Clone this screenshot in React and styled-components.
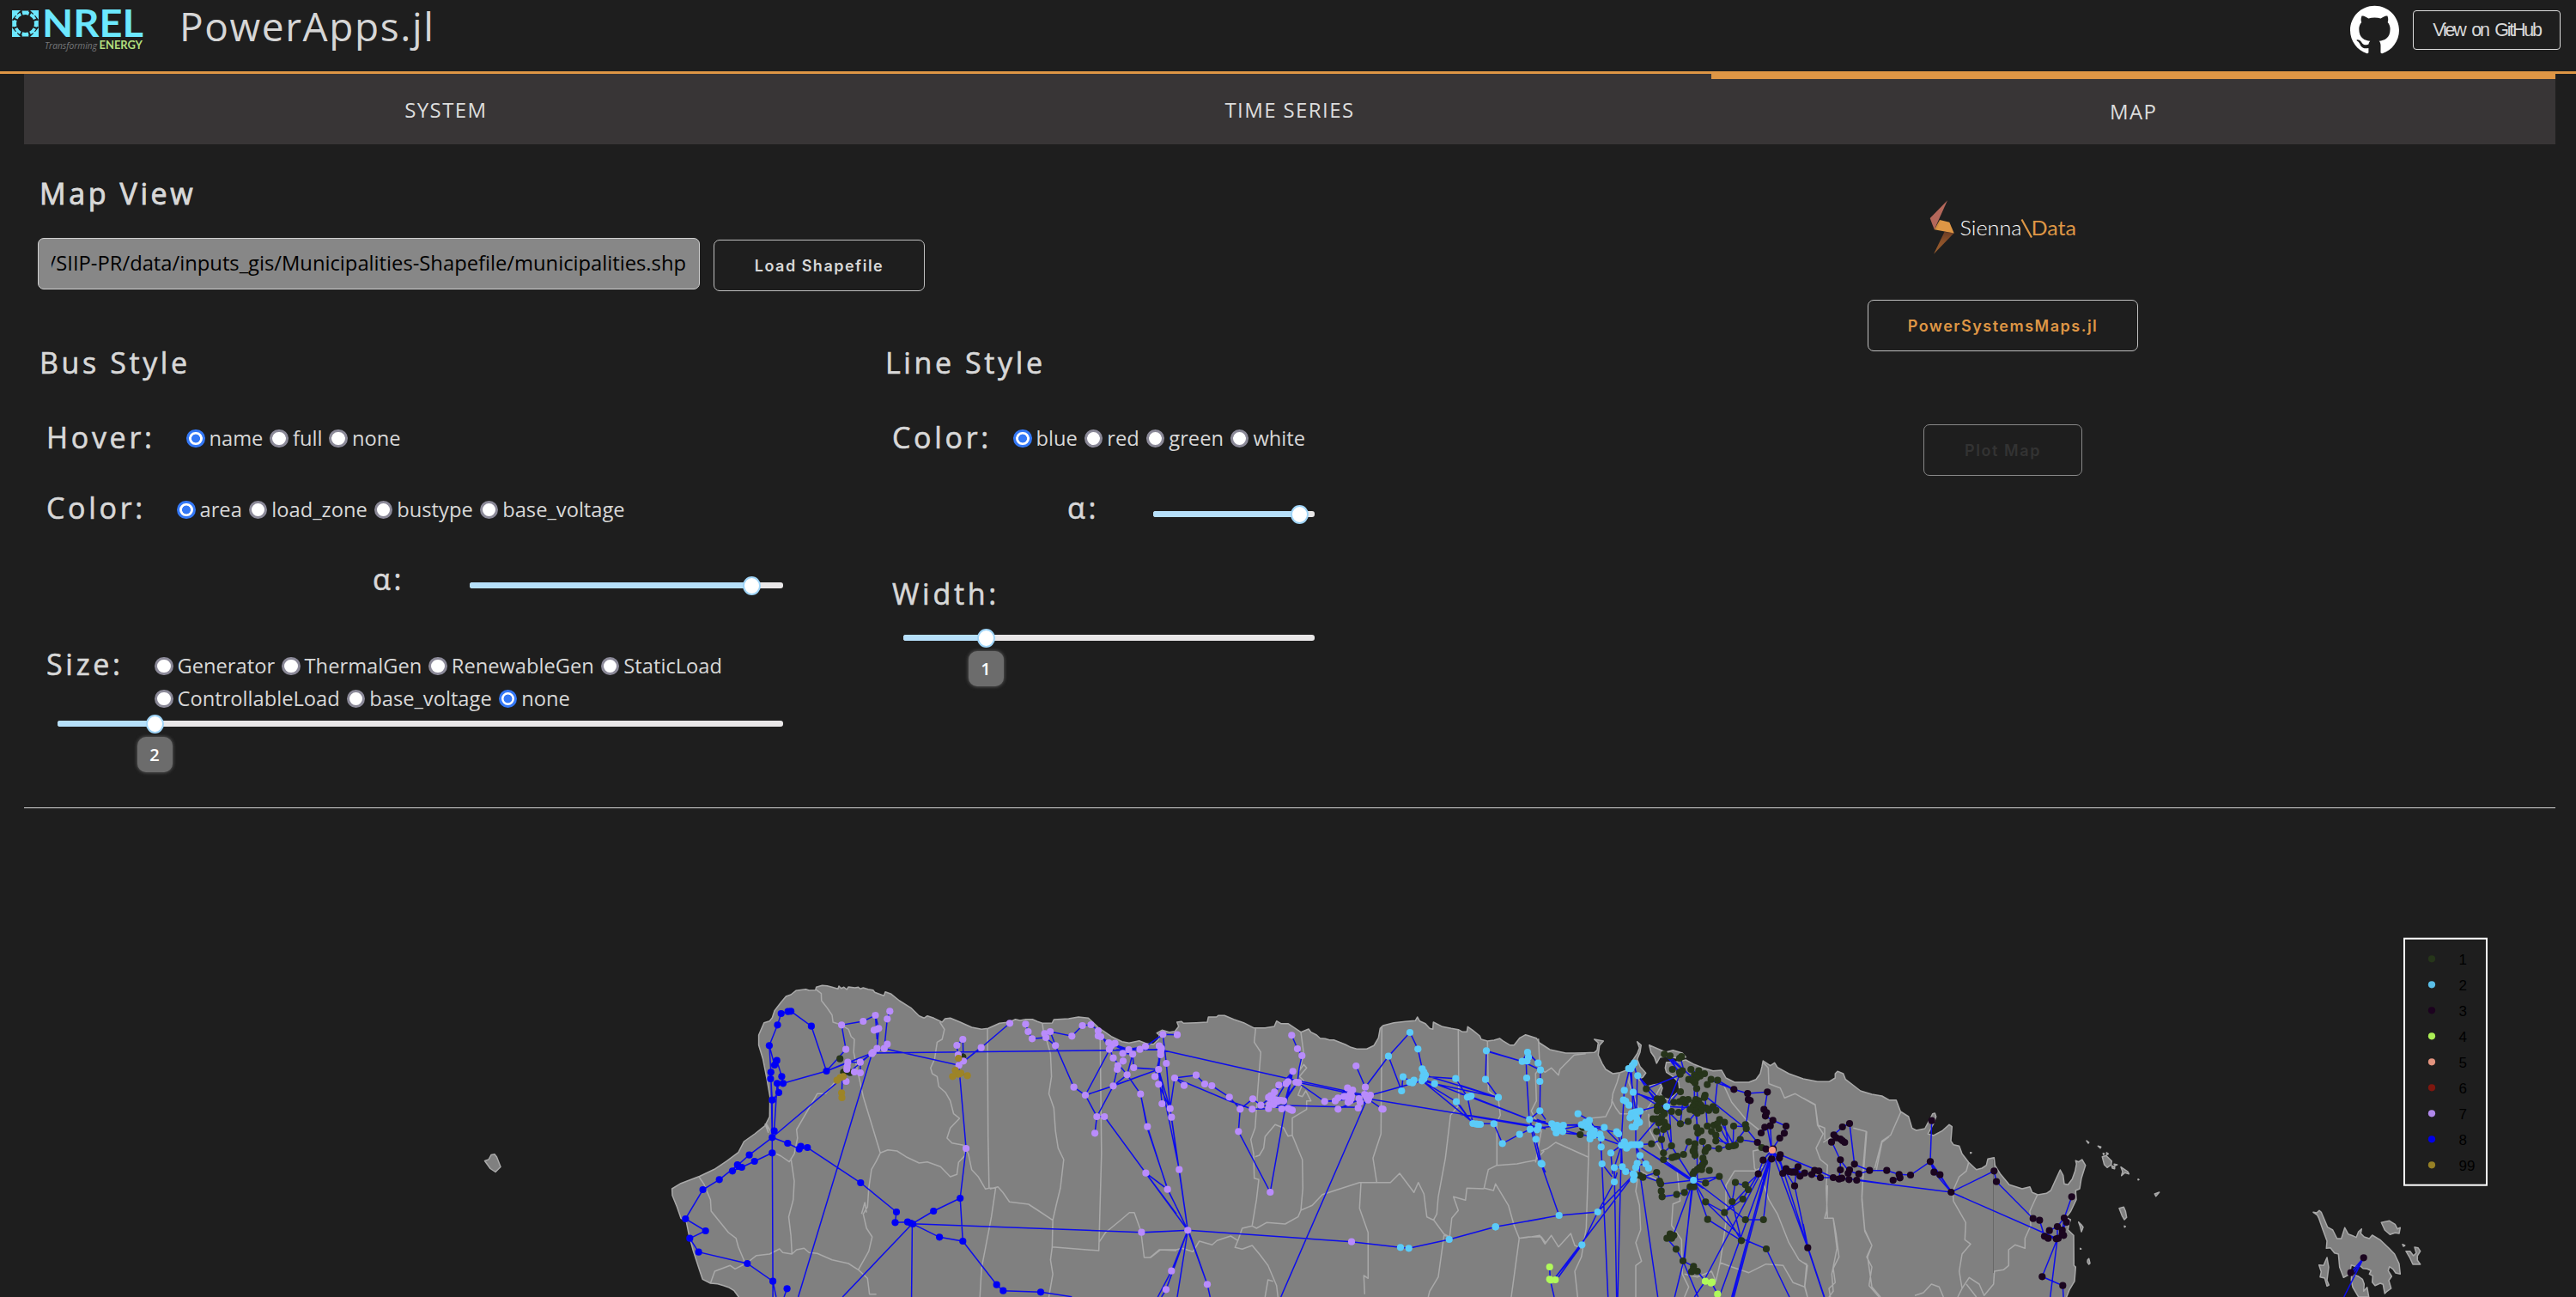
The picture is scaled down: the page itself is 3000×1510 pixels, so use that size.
import React from 'react';
import styled, { createGlobalStyle, css } from 'styled-components';

const c = {
  bg: '#1e1e1e',
  panel: '#383536',
  accent: '#de9645',
  text: '#d8d8d8',
  rule: '#d6d6d6',
  sky: '#b6e0fa',
  skyEdge: '#a0d5f8',
};

const Global = createGlobalStyle`
  * { box-sizing: border-box; }
  body {
    margin: 0;
    background: ${c.bg};
    color: ${c.text};
    font-family: "Open Sans", "Noto Sans", sans-serif;
    overflow: hidden;
  }
`;

const Page = styled.div`
  width: 3000px;
  height: 1510px;
  display: flex;
  flex-direction: column;
  overflow: hidden;
`;

/* ---------- header ---------- */

const Header = styled.header`
  height: 86px;
  flex: none;
  display: flex;
  align-items: flex-start;
  border-bottom: 3px solid ${c.accent};
  padding: 0 18px 0 12px;
`;

const LogoSvg = styled.svg`
  flex: none;
`;

const AppTitle = styled.h1`
  margin: 0 auto 0 35px;
  font-size: 46px;
  line-height: 60px;
  font-weight: 400;
  letter-spacing: 1.6px;
  color: #d6d6d6;
`;

const GithubMark = styled.svg`
  margin: 6px 16px 0 0;
`;

const GithubButton = styled.button`
  width: 172px;
  height: 46px;
  margin-top: 12px;
  padding: 0;
  background: transparent;
  border: 1.5px solid #dcdcdc;
  border-radius: 4px;
  color: ${c.text};
  font: 400 21.5px "Liberation Sans", Arial, sans-serif;
  letter-spacing: -2.25px;
  word-spacing: 4px;
`;

/* ---------- tabs ---------- */

const Tabs = styled.nav`
  display: grid;
  grid-template-columns: repeat(3, 1fr);
  height: 82px;
  flex: none;
  margin: 0 24px 0 28px;
  background: ${c.panel};
`;

const Tab = styled.a`
  display: flex;
  align-items: center;
  justify-content: center;
  font-size: 24px;
  letter-spacing: 1.4px;
  color: #dddddd;
  ${(p) => p.$active && css`
    border-top: 6px solid ${c.accent};
    padding-bottom: 2px;
  `}
`;

/* ---------- controls ---------- */

const Controls = styled.main`
  display: grid;
  grid-template-columns: 1661px 1287px;
  height: 773px;
  flex: none;
  margin: 0 24px 0 28px;
  border-bottom: 1.5px solid ${c.rule};
`;

const Settings = styled.section`
  display: flex;
  flex-direction: column;
  padding-top: 37px;
`;

const Heading = styled.h2`
  margin: 0;
  padding-left: 18px;
  font-size: 34px;
  line-height: 40px;
  font-weight: 400;
  letter-spacing: 3.6px;
  -webkit-text-stroke: ${(p) => (p.$strong ? 0.9 : 0.6)}px ${c.text};
`;

const FileRow = styled.div`
  display: flex;
  align-items: flex-start;
  gap: 16px;
  padding: 32px 0 0 16px;
  height: 94px;
`;

const PathField = styled.div`
  width: 771px;
  height: 60px;
  padding: 0 15px;
  display: flex;
  align-items: center;
  border: 1.5px solid #d0d0d0;
  border-radius: 7px;
  background: #878787;
  color: #000;
  font-size: 23.75px;
`;

const PathText = styled.div`
  flex: 1;
  display: flex;
  justify-content: flex-end;
  overflow: hidden;
  white-space: nowrap;
  line-height: 40px;
  padding-bottom: 2px;
`;

const Button = styled.button`
  width: ${(p) => p.$w}px;
  height: 60px;
  padding: 0;
  flex: none;
  background: transparent;
  border: 1.3px solid #bfbfbf;
  border-radius: 7px;
  font: 600 18px Inter, sans-serif;
  letter-spacing: ${(p) => p.$track || 1.5}px;
  color: ${c.text};
  ${(p) => p.$kind === 'file' && css`margin-top: 2px;`}
  ${(p) => p.$kind === 'accent' && css`color: ${c.accent};`}
  ${(p) => p.$kind === 'dim' && css`color: #333333; border-color: #888888;`}
`;

const StyleColumns = styled.div`
  display: grid;
  grid-template-columns: 985px 676px;
  margin-top: 63px;
`;

const StyleColumn = styled.section`
  display: flex;
  flex-direction: column;
`;

const Field = styled.div`
  display: flex;
  align-items: flex-start;
  margin-top: ${(p) => p.$gap}px;
  padding-left: ${(p) => p.$indent ?? 26}px;
  height: 40px;
`;

const FieldLabel = styled.label`
  width: ${(p) => p.$w}px;
  flex: none;
  font-size: 34px;
  line-height: 40px;
  font-weight: 400;
  letter-spacing: 3.7px;
  -webkit-text-stroke: 0.6px ${c.text};
`;

const Options = styled.div`
  display: flex;
  flex-wrap: wrap;
  align-items: center;
  align-content: flex-start;
  column-gap: 8px;
  width: ${(p) => (p.$w ? `${p.$w}px` : 'auto')};
  padding-top: ${(p) => p.$top ?? 2}px;
`;

const Option = styled.label`
  display: flex;
  align-items: center;
  gap: 5px;
  font-size: 23.7px;
  line-height: 38px;
`;

const Radio = styled.input`
  appearance: none;
  width: 21.5px;
  height: 21.5px;
  margin: 1px 0 0;
  border-radius: 50%;
  border: 3px solid #8b8998;
  background: #fff;
  &:checked {
    border-color: #3478f6;
    background: radial-gradient(circle, #3478f6 0 4.6px, #fff 5.3px);
  }
`;

const SliderTrack = styled.div`
  position: relative;
  width: ${(p) => p.$w}px;
  height: 7px;
  margin: ${(p) => p.$margin};
  flex: none;
  border-radius: 3px;
  background: #e9e7e8;
`;

const SliderFill = styled.div`
  height: 7px;
  border-radius: 3px 0 0 3px;
  background: ${c.sky};
`;

const SliderThumb = styled.div`
  position: absolute;
  top: -7.5px;
  width: 21px;
  height: 22px;
  margin-left: -10.5px;
  border-radius: 50%;
  border: 2.5px solid ${c.skyEdge};
  background: #fff;
`;

const SliderBubble = styled.div`
  position: absolute;
  top: 19px;
  width: 41px;
  height: 41px;
  margin-left: -20.5px;
  border-radius: 10px;
  background: #6c6c6c;
  box-shadow: 0 0 4px #6c6c6c;
  color: #fff;
  font-size: 20px;
  font-weight: 600;
  line-height: 41px;
  text-align: center;
`;

const Actions = styled.aside`
  display: flex;
  flex-direction: column;
  align-items: center;
  padding-top: 65px;
`;

const SiennaSvg = styled.svg`
  margin-bottom: 53px;
`;

const PlotSlot = styled.div`
  margin-top: 85px;
`;

/* ---------- map ---------- */

const MapSvg = styled.svg`
  display: block;
  flex: none;
`;

function Slider({ width, value, bubble, margin }) {
  return (
    <SliderTrack $w={width} $margin={margin}>
      <SliderFill style={{ width: value }} />
      <SliderThumb style={{ left: value }} />
      {bubble && <SliderBubble style={{ left: value }}>{bubble}</SliderBubble>}
    </SliderTrack>
  );
}

function RadioGroup({ name, items, selected, width, top }) {
  return (
    <Options $w={width} $top={top}>
      {items.map((t) => (
        <Option key={t}>
          <Radio type="radio" name={name} defaultChecked={t === selected} />
          {t}
        </Option>
      ))}
    </Options>
  );
}

function NrelLogo() {
  return (
    <LogoSvg width="162" height="66" viewBox="12 0 162 66">
      <g fill="#6ce8ff">
        <path d="M14 12h10l-4 4 1 3-3-1-4 5zM45 12H35l4 4-1 3 3-1 4 5zM14 43h10l-4-4 1-3-3 1-4-5zM45 43H35l4-4-1-3 3 1 4-5z" />
        <path d="M25.500 12.500h8l-1 4h-6zM25.500 42.500h8l-1-4h-6zM14.200 23.500l3 1v6l-3 1zM44.800 23.500l-3 1v6l3 1z" />
      </g>
      <circle cx="29.500" cy="27.500" r="12.200" fill="none" stroke="#6ce8ff" strokeWidth="3.600" strokeDasharray="7.600 1.980" strokeDashoffset="3.800" />
      <text x="49" y="43" textLength="118" lengthAdjust="spacingAndGlyphs" fill="#6ce8ff" fontFamily="Lato, sans-serif" fontWeight="700" fontSize="43">NREL</text>
      <text x="52" y="56.500" textLength="61" lengthAdjust="spacingAndGlyphs" fill="#77787b" fontFamily="Open Sans, sans-serif" fontStyle="italic" fontSize="11.500">Transforming</text>
      <text x="115.500" y="57" textLength="50.500" lengthAdjust="spacingAndGlyphs" fill="#b2df7e" fontFamily="Lato, sans-serif" fontWeight="700" fontSize="12.500">ENERGY</text>
    </LogoSvg>
  );
}

function SiennaLogo() {
  return (
    <SiennaSvg width="173" height="63" viewBox="2246 233 173 63">
      <defs>
        <linearGradient id="low" x1="0" y1="0" x2="0" y2="1">
          <stop offset="0" stopColor="#6b3c24" />
          <stop offset="0.400" stopColor="#8a5029" />
          <stop offset="1" stopColor="#9c6030" />
        </linearGradient>
        <linearGradient id="mid" x1="0" y1="0" x2="1" y2="0.300">
          <stop offset="0" stopColor="#9c6530" />
          <stop offset="0.350" stopColor="#de9645" />
        </linearGradient>
      </defs>
      <path d="M2264.500 270L2275.700 271.300 2252 295.700z" fill="url(#low)" />
      <path d="M2259 256L2270.300 258.700 2275.700 271.500 2252.700 267.300z" fill="url(#mid)" />
      <path d="M2268 233.300L2247.700 254 2252.700 267.300z" fill="#b4675a" />
      <text x="2282.500" y="274" textLength="72" lengthAdjust="spacingAndGlyphs" fill="#fff" fontFamily="Lato, sans-serif" fontWeight="300" fontSize="23.500">Sienna</text>
      <path d="M2354.500 255.500L2366 276.500" stroke={c.accent} strokeWidth="2.200" />
      <text x="2365.500" y="274" textLength="52.500" lengthAdjust="spacingAndGlyphs" fill={c.accent} fontFamily="Lato, sans-serif" fontSize="23.500">Data</text>
    </SiennaSvg>
  );
}

/* Map geometry is stored per tile; each tile has its own origin and scale. */
const TILES = {
  A: [770, 1110, 2.6133, 3],
  B: [1300, 1110, 3, 3],
  C: [1700, 1110, 3, 3],
  D: [2100, 1180, 3, 3],
  E: [2640, 1070, 3, 3],
};

const project = (tile, s) => {
  const [ox, oy, sx, sy] = TILES[tile];
  return s.trim().split(/\s+/).map((p) => {
    const [x, y] = p.split(',').map(Number);
    return [+(ox + x / sx).toFixed(1), +(oy + y / sy).toFixed(1)];
  });
};

const toPath = (pts) => 'M' + pts.map((p) => p.join(' ')).join('L');
const linesOf = (tile, s) => s.trim().split('|').map((l) => toPath(project(tile, l))).join('');

const coast = toPath([
  ...project('A', '236,1215 236,1200 222,1178 205,1166 190,1160 172,1154 150,1152 126,1138 115,1100 98,1040 85,985 76,935 60,925 48,885 34,845 33,822 60,803 118,778 165,752 200,725 235,695 252,657 285,630 316,602 330,570 331,500 322,440 310,370 297,320 297,285 313,242 330,236 338,225 345,200 365,170 380,150 395,144 410,130 440,125 450,129 470,128 472,118 490,112 505,113 520,118 538,124 541,114 548,122 556,118 565,126 570,117 590,120 600,118 606,124 615,120 630,125 645,128 650,136 660,140 678,148 682,134 700,142 725,165 760,190 785,218 800,226 810,218 830,226 855,240 864,228 880,226 910,240 945,258 975,265 995,262 1030,244 1060,240 1078,230 1092,234 1110,230 1130,230 1145,238 1160,244 1190,243 1195,231 1240,228 1270,222 1300,226 1330,258 1370,290'),
  ...project('B', '20,308 45,313 80,305 105,315 130,317 148,300 150,285 142,278 160,268 185,275 205,272 218,255 212,240 228,238 235,244 280,242 318,240 322,222 350,222 356,217 378,217 410,230 445,242 480,260 520,260 552,255 560,236 575,245 600,245 645,275 672,264 680,275 700,285 712,296 730,298 745,302 760,302 800,318 820,328 840,334 875,334 900,322 916,295 922,262 932,252 970,242 1010,238 1045,235 1052,222 1060,236 1080,245 1095,262 1106,265 1108,240 1140,256 1170,262 1195,266 1210,274 1225,274 1228,256 1245,268 1270,288 1275,300'),
  ...project('C', '97,306 120,303 140,297 150,305 175,320 190,320 210,295 230,284 268,296 278,312 315,336 370,348 400,348 440,347 470,346 480,338 484,312 470,300 502,306 488,322 484,355 498,385 510,405 535,420 560,416 590,405 600,380 620,350 628,330 620,308 634,320 630,345 620,370 630,395 650,418 640,432 625,440 640,450 655,465 680,458 702,455 708,470 702,490 712,505 730,510 750,495 768,480 765,450 745,430 722,415 718,400 722,380 750,380 790,372 820,388 850,400 885,410 915,408 922,420 930,435 960,450 1010,450 1035,440 1050,420 1056,395 1060,375 1085,392 1100,382 1110,398 1150,420 1200,438 1250,448 1290,448 1312,435 1312,420 1320,412 1340,420 1348,440 1400,480 1440,492 1475,498'),
  ...project('D', '300,302 325,302 340,342 368,360 380,400 395,408 425,402 445,365 452,350 460,348 464,360 455,385 436,420 455,426 485,410 510,388 520,395 516,445 525,458 545,463 555,490 578,520 605,545 625,540 640,530 645,508 667,503 670,530 690,562 720,598 765,612 792,605 800,625 820,633 850,628 865,618 880,585 898,546 908,565 912,595 925,598 940,578 950,550 955,525 952,514 962,518 974,510 986,530 972,575 966,612 952,618 954,650 935,690 928,700 918,712 934,720 928,738 925,755 945,775 946,880 952,885 948,935 930,965 920,990 920,1010'),
]) + 'Z';

const islands = [
  ['C', '662,320 690,332 720,345 745,338 778,348 790,362 760,366 725,360 700,362 688,384 680,362 668,345'],
  ['D', '1045,500 1058,496 1078,515 1076,528 1062,538 1052,528'],
  ['D', '1078,532 1088,535 1088,542 1080,540'],
  ['D', '1086,526 1097,528 1090,531'],
  ['D', '1110,536 1122,544 1134,552 1138,560 1124,556 1112,566 1116,552'],
  ['D', '990,444 998,450 996,453'],
  ['D', '1030,463 1040,466 1038,470'],
  ['D', '1048,488 1052,490 1049,493'],
  ['D', '1060,486 1066,490 1061,493'],
  ['D', '1104,680 1120,676 1126,690 1130,712 1122,720 1114,706'],
  ['D', '1228,630 1244,624 1236,634 1232,638'],
  ['D', '962,728 972,738 978,746 972,762 968,745'],
  ['D', '994,860 998,856 1002,872 998,876 993,868'],
  ['D', '584,485 588,486 585,488'],
  ['D', '1170,578 1173,580 1170,581'],
  ['D', '1122,742 1126,744 1123,746'],
  ['D', '968,820 971,822 968,823'],
  ['E', '162,1024 174,1026 183,1018 190,1024 200,1048 212,1076 230,1086 245,1116 260,1116 272,1078 284,1100 300,1106 312,1112 320,1092 331,1082 328,1098 340,1110 358,1116 368,1104 395,1120 425,1148 446,1170 462,1204 466,1240 450,1236 440,1222 428,1214 424,1228 436,1248 426,1262 434,1290 420,1300 412,1308 406,1276 396,1272 378,1280 368,1268 370,1246 358,1240 364,1228 350,1222 336,1220 322,1208 312,1214 295,1208 292,1224 286,1242 268,1252 254,1216 250,1170 236,1166 222,1148 208,1150 210,1124 196,1086 182,1046 176,1034'],
  ['E', '296,1240 320,1248 334,1258 340,1275 338,1300 350,1286 356,1320 320,1320 300,1286 295,1262'],
  ['E', '182,1208 198,1210 210,1182 216,1216 210,1262 217,1278 210,1282 202,1254 186,1250 190,1232'],
  ['E', '400,1060 428,1054 448,1066 456,1082 466,1078 462,1098 448,1096 430,1102 412,1086'],
  ['E', '486,1160 500,1160 512,1176 522,1166 516,1146 528,1148 536,1160 526,1176 526,1192 536,1206 510,1206 500,1184'],
  ['E', '474,1136 482,1140 477,1143'],
].map(([t, s]) => toPath(project(t, s)) + 'Z').join('') + 'M564.500 1351.500L569 1350 572 1344.500 576 1343.700 578.500 1347 583 1358.500 577 1364.500 571 1360.500Z';

const borders = [
  ['A', '470,125 487,140 488,165 505,190 520,215 523,240 545,248 570,265 578,290 588,300 586,345 592,380 615,500 640,595 667,697 655,725 640,755 632,820 628,885 615,910 625,960 642,990 632,1040 600,1105 628,1135 634,1190 655,1190|667,697 690,686 718,690 745,710 785,732 810,728 850,745 880,780 900,772 905,730 925,705 920,670 885,662 870,645 880,610 908,576 890,560 880,515 865,485 845,465 840,430 825,420 820,400 832,370 840,310 855,300 862,265 848,240|993,262 995,640 998,820 987,823 965,780 945,755 935,700 920,672|550,415 535,440 500,490 475,490 440,560 412,615 415,645 405,700 390,728 365,708 350,700|395,715 405,795 402,860 388,920 395,985 398,1050 370,1045 360,1032 330,1050 290,1055 262,1080|316,595 326,625 320,595 335,625|115,780 130,805 150,860 152,900 180,940 205,975 228,995 235,1025 255,1080|150,1152 163,1110 210,1090 225,1102 262,1080 |398,1050 412,1035 435,1030 450,1045 475,1048 520,1070 570,1083 600,1105|610,910 620,870 625,905|998,820 1018,820 1005,920 975,1100 970,1200|1000,823 1025,815 1040,835 1060,868 1118,876 1150,900 1192,932|1160,244 1165,285 1175,310 1185,350 1188,430 1180,490 1195,540 1200,620 1208,680 1225,720 1215,820 1202,880 1192,932 1190,1025 1185,1070 1192,1120 1180,1200|1336,290 1340,700 1332,1038 1190,1025|1332,1010 1352,975 1400,930 1425,905 1440,905 1460,970 1470,1062 1490,1062 1520,1035 1568,1038'],
  ['B', '98,1062 118,1062 150,1035 210,1035 230,1030 268,1042 290,1005 335,1018 352,1003 400,987 425,1003 440,960 475,952 490,960 525,940 590,945 635,920 645,897 685,880 720,842 780,823 850,800 958,800 990,768 1040,835 1055,800 1075,840 1085,920 1110,932 1145,980 1165,990 1172,925 1195,898 1178,850 1220,862 1225,820 1285,822|487,262 482,310 505,345 495,470 485,610 470,650 480,700 482,785 498,790 490,860 475,950|485,710 500,705 515,680 520,640 555,598 585,610 600,638 615,635 650,720 652,820 645,897|615,635 615,575 665,545 665,515 680,515 662,480 650,500 635,495 655,445 640,430 665,400 655,388 640,410 655,350 645,275|928,254 925,630 897,715 910,798|855,800 850,890 880,975 880,1135 865,1125 868,1190|1195,265 1197,530 1168,565 1150,715 1125,850 1120,910 1108,932|1297,306 1300,480 1335,510 1342,565 1330,590 1330,740 1300,755 1285,820|1330,740 1400,735 1465,722 1495,690|1285,820 1318,828 1325,805 1370,880 1390,950 1408,995 1395,1090 1380,1200|1165,990 1145,985 1125,1130 1095,1180 1090,1200|425,1003 415,1027 440,1033 475,1020 500,1050 530,1090 560,1160 565,1200|520,1200 530,1140 548,1145|1405,995 1440,990 1485,990 1500,1010'],
  ['C', '275,298 280,400 298,415 320,400 345,425 350,405 400,355 440,350|280,400 265,420 268,515 250,550 285,620 265,730|285,690 305,682 335,660 450,712 452,600 460,575 510,570 530,530 535,490 550,450 558,420|450,712 442,960 425,1060 402,1110 412,1200|205,995 250,990 280,985 298,1015 320,985 345,1025 388,978 402,1020 425,1030|530,510 545,540 560,560 590,560|600,400 590,450 630,555|625,760 615,830 628,880 632,965 615,1010 635,1075 615,1090 615,1200|630,760 690,790|650,550 680,505 705,460|660,560 665,620 720,720 760,760 770,865 745,875 740,950 775,1000 778,1120 800,1165 785,1200|785,1120 830,1130 880,1110 895,1145 910,1080 930,940 930,810 960,760 1030,760 1060,745|910,1080 950,1095 1010,1115 1070,1085 1130,1090 1165,1150 1205,1165|1060,380 1078,400 1080,455 1120,470 1135,505 1172,490 1242,530 1250,600 1270,630 1245,680 1260,720 1285,740 1280,820 1285,925 1305,925 1318,1030 1300,1120 1305,1180 1290,1200|920,455 950,520 1000,580 1050,620|1050,685 1025,690 1030,750 1060,800 1080,860 1110,910 1150,1010 1185,1070 1215,1090 1205,1165 1215,1200|1270,660 1300,640|1375,610 1420,622 1410,740 1405,850 1415,965 1440,1020 1425,1060 1440,1165 1470,1200|1500,640 1475,660 1455,760'],
  ['D', '342,342 305,425 275,445 250,540|222,412 215,500 208,590 205,650 215,760 240,810 222,850 240,885 230,950 265,990|0,295 42,318 52,390 75,400 75,440|85,600 82,690 75,715 105,715 115,770 125,850 105,890 112,940 90,960 95,990|578,520 570,550 545,570 523,620 525,655 568,730 565,790 585,805 555,840 545,900 555,960 540,990|555,960 580,922 615,945 632,985 665,945 668,900 700,895 718,880 718,825 740,808 775,820 775,785 795,740 792,690 818,633|390,985 420,975 448,945 475,955 490,990|570,945 605,990|0,870 12,875 5,950 15,990'],
].map(([t, s]) => linesOf(t, s)).join('');

const circuits = [
  ['A', '338,643 334,415 329,322 354,250 365,210 386,202 395,202 457,254 503,411 371,454 353,454 358,486 338,512|329,322 345,390 352,374 367,430 371,454|353,454 344,620|338,512 338,643 338,697 284,726 245,747 217,760|334,438 338,512|338,643 268,704 232,740 177,790 127,825 74,927 135,969 87,995 114,1043 262,1083 340,1145 350,1200|338,643 340,1145 340,1200|383,1171 374,1200|338,643 385,663 420,683 445,678 607,801 716,903 712,940 750,938 764,944 829,900 910,855 918,1005 847,991 764,944|764,944 762,1200|764,944 552,1200|338,643 555,432 642,348|503,411 642,348 417,1200|503,411 562,335 549,250 615,237 652,216 662,262 657,332 642,348|648,268 662,262|652,216 657,300|503,411 568,380 606,380 606,417 588,414|606,380 642,348 679,332 688,229 696,202|679,332 906,391 974,329 1061,244|642,348 1362,338 1525,336|906,391 900,320 918,300 920,376|906,391 974,327|905,365 906,391 928,681 910,855|897,410 932,427|549,505 552,420|918,1005 1021,1157 1041,1178 1155,1183 1250,1199|764,944 1462,974 1568,969|1109,247 1117,273 1129,298 1170,294 1184,273 1250,289 1282,252 1308,249 1330,270 1337,290 1364,313 1423,335 1474,325 1526,283|1170,294 1200,322 1256,467 1291,495 1326,570 1320,628|1184,273 1200,322|1291,495 1376,463 1418,424 1376,365 1364,330 1330,270|1364,313 1435,352 1438,399 1513,405|1364,338 1291,495|1326,570 1376,463 1513,405|1326,570 1349,570 1475,767 1541,824|1406,376 1388,405 1376,463|1405,349 1435,352 1418,424 1459,491 1480,605 1541,824 1568,885|1475,767 1568,910|1364,310 1423,340 1457,335'],
  ['B', '163,283 213,284|163,283 175,384 188,542 250,967|150,323 148,405 160,525|155,340 148,405 188,542|148,405 220,755 250,967|0,325 40,335 103,325 163,283|0,337 150,335 615,440 870,495|60,400 148,405|148,405 0,458|148,456 188,542 193,572 250,967|135,430 155,350|204,435 188,542|204,435 279,425 309,456 334,462 395,502 433,544 427,622 538,834 590,540 617,412|237,461 204,435 395,515 475,544 531,542|433,544 477,508 505,530 580,540|505,530 545,500 568,460 603,450 617,412 590,515|553,485 617,412 613,430 540,495|553,520 617,412|590,515 633,450|595,500 633,450 728,517 765,515 808,470|633,450 639,400 649,357 633,333 613,286|633,450 870,500|560,530 845,538 890,500|838,393 870,467 877,507 931,544|728,517 810,510|775,544 850,510|845,540 870,500 997,465 1068,445|870,467 951,359 1026,276 1054,334 1069,403 1078,425|951,359 997,480 1002,431 1034,450|877,507 575,1200|877,507 1443,600 1500,612|1075,430 1186,437 1227,502 1246,594|1068,445 1112,455 1335,503|1078,425 1335,503|1068,445 1188,518 1246,594|1075,450 1246,590|1075,440 1443,580|1246,594 1319,595 1349,664 1409,632 1446,614|1293,340 1290,440 1335,503|1293,340 1418,377 1437,345 1474,383 1482,407 1480,550 1443,580|1418,377 1482,407|1434,435 1432,377|1434,435 1443,580 1466,649 1486,735 1500,765|1443,580 1500,588|1446,600 1480,735|1465,600 1500,610|103,767 180,824 250,967|103,767 250,967 88,975|180,824 107,606 85,491|250,967 822,1007 993,1027 1022,1030 1163,999 1325,955 1500,924|250,967 193,1109 145,1200|250,967 174,1174 158,1200|250,967 213,1200|252,967 318,1156 328,1200|250,967 318,1156|1480,550 1500,580'],
  ['C', '93,341 218,377|0,460 135,503|0,490 40,500 244,580 320,600 455,600|0,530 45,595|0,562 244,604|234,345 274,383 282,407|244,580 266,649 284,735 347,915|125,955 347,915 482,903 540,798 550,765|244,604 270,610 360,600|270,580 320,600|330,610 420,632 495,645 565,670|355,615 430,600 505,608 565,670|340,625 421,633|413,560 453,583 490,632 497,735 532,780|360,600 425,598|425,600 550,625 565,670 615,668|482,903 427,1018 335,1130|427,1018 345,1130|482,903 615,765 335,1130|314,1095 316,1140 330,1200|494,676 518,1200|534,770 528,697 565,670 540,748 548,1200|565,670 552,1200|565,650 575,478 593,402 606,485|575,478 593,402 615,553 615,668|606,380 620,430 618,553|600,402 605,550|590,530 572,512 575,478|606,485 700,520|622,427 700,512|625,430 690,525|620,490 695,515|625,490 690,530|652,473 768,425 723,535|655,475 695,520|630,550 688,535|630,580 635,553|615,668 690,580|615,668 630,706 660,750|615,668 670,665 705,650 712,697 739,672 815,792|615,668 817,792 712,720 750,710 782,702 800,658|620,670 850,820|615,668 692,1200|635,782 688,765 705,805 817,792|620,770 705,800 707,850 758,842 785,835 817,792|565,670 568,745 610,770 606,790|615,740 650,735|540,748 568,745|717,352 770,400|735,360 760,410|740,365 775,400|770,360 782,405 820,440|720,355 768,415|768,480 723,535 830,540|695,520 771,595 798,588 830,550|765,555 800,530|771,595 780,510 745,520|830,470 828,560 830,792|820,410 820,530 835,630 820,720|825,430 835,550|855,495 830,540 890,548|857,497 865,603 895,650|901,443 890,545|870,440 958,475 1006,489 1075,484 1065,545 1068,568|901,443 958,475|860,500 1000,612|905,445 960,480|1013,513 1001,590 1001,612 1040,660|1006,489 1013,513|865,540 880,550|908,580 958,670|905,600 945,675|957,603 955,670|925,590 940,672 905,683 870,678 856,692|880,620 940,675|895,650 955,670 1000,612|957,603 1000,605|980,650 1040,660 1068,683|848,655 856,692 817,792|740,672 733,550|715,590 740,672|690,585 712,697|710,640 720,590|817,792 859,868 925,905 989,858 1008,825|817,792 907,779 952,867|817,792 859,802 907,779|817,792 866,929 984,1003 952,867 963,800 998,812|817,792 998,930 1061,930 1090,687|859,868 984,990|925,905 984,1003|925,905 1000,825|984,995 1071,1032 1152,1200|817,792 782,1074 751,1200|812,800 785,1074|817,792 748,980 724,995 756,1033 780,1074 833,1200|780,1074 817,1093 830,1110 858,1145 880,1150 901,1190|858,1145 820,1200|855,1140 1090,695|910,1190 1090,695|950,1200 1090,690|958,1200 1092,695|953,1200 1085,700|1090,687 1060,722 1043,770 989,858|1043,770 998,812|1090,687 1075,610 1053,627|1090,687 1085,602 1094,583 1068,568|1090,687 1118,645 1134,628 1140,603 1094,583|1066,607 1085,602|1090,687 1117,715 1129,768 1182,745 1189,778|1120,703 1255,760 1305,783|1090,687 1170,812 1216,1028|1090,687 1216,1028 1273,1200|1117,715 1216,1028|1170,812 1175,765|1129,768 1140,750 1205,767 1230,772 1260,783 1305,783|1230,770 1243,758|1300,658 1330,722 1359,760 1393,770 1432,758 1500,758|1308,632 1338,606 1362,594 1379,737 1432,758|1345,658 1308,632|1330,722 1330,756 1325,785|1305,783 1385,790 1500,806'],
  ['D', '185,582 517,624 667,550 675,587 803,716 826,722 843,778 888,787|517,624 888,787|232,548 292,548 335,562 375,564 444,517 449,374|314,582 338,574|444,517 457,554 517,624|444,517 478,563 517,624|450,530 517,620|888,787 888,744 860,758 850,780|888,744 912,714 938,640|912,714 906,756 910,775|920,729 888,787 835,919 907,950 909,990|888,787 863,990|17,818 0,735|17,818 74,990'],
  ['E', '338,1183 269,1320|338,1183 293,1235|340,1183 300,1240'],
].map(([t, s]) => linesOf(t, s)).join('');

const groups = [
  ['#0000f5', [
    ['A', '386,203 395,202 365,210 354,250 457,254 329,322 352,374 345,390 334,415 333,438 367,430 353,454 371,454 358,486 338,512 503,411 344,620 338,643 385,663 420,683 425,674 445,678 338,697 268,704 284,726 232,738 245,747 236,744 217,760 177,790 127,825 74,927 135,969 87,995 114,1043 262,1083 340,1145 383,1171 607,801 716,903 712,940 750,938 760,942 766,945 829,900 910,855 847,991 918,1005 1021,1157 1041,1178 1155,1183'],
  ]],
  ['#26341a', [
    ['A', '544,368 575,416 555,415 918,362'],
    ['C', '715,352 735,358 775,360 768,366 743,405 768,415 778,410 770,422 808,405 835,410 855,420 820,425 840,428 828,435 800,440 815,445 822,452 878,440 901,443 865,458 828,472 857,495 855,503 771,483 652,473 690,508 705,508 710,518 698,522 690,535 700,545 690,550 710,550 715,560 740,552 748,520 768,518 780,510 798,510 788,522 765,555 780,518 825,510 835,515 820,520 828,530 815,535 842,530 850,538 830,545 820,550 845,550 805,545 830,558 862,540 885,535 870,548 895,548 675,578 688,578 700,580 715,590 695,592 706,570 718,600 726,606 712,615 688,622 771,595 798,587 828,608 843,620 832,628 865,603 888,600 908,580 925,590 900,595 905,612 880,622 895,635 895,655 957,603 998,598 1001,612 980,650 963,670 940,675 955,672 905,682 868,678 857,692 848,657 860,685 800,658 822,665 820,680 820,695 822,705 815,690 782,702 740,672 670,665 705,650 712,697 712,720 742,713 752,710 760,708 850,715 855,730 848,740 838,748 845,755 872,758 830,755 820,762 815,770 688,765 640,782 628,775 698,795 702,805 704,830 707,850 758,842 785,835 805,815 818,815 859,802 907,779 859,868 866,929 925,905 952,867 963,800 998,808 1008,825 989,858 998,930 1061,930 984,1003 1071,1032 735,980 748,985 740,995 724,995 742,990 756,1033 780,1074 817,1093 810,1112 830,1110 815,1105 421,633 430,608 1055,678'],
  ]],
  ['#1b051f', [
    ['C', '958,475 1006,489 1008,510 1015,514 1075,484 1063,545 1072,556 1068,568 1094,583 1085,602 1066,607 1053,627 1140,603 1134,628 1118,645 1040,660 1070,683 1095,683 1060,722 1090,718 1120,703 1117,715 1043,770 1129,768 1140,752 1150,762 1160,764 1172,764 1182,745 1189,778 1205,767 1230,772 1240,758 1255,760 1260,783 1170,812 1216,1028'],
    ['D', '162,384 137,396 107,424 115,434 130,438 137,444 145,450 99,449 130,511 179,526 130,546 162,546 157,558 194,560 105,573 125,578 135,575 160,580 187,582 232,548 292,548 335,562 338,574 314,582 375,564 444,517 449,374 457,554 478,563 517,624 667,550 675,587 803,716 826,722 888,744 860,758 843,778 856,785 884,787 891,785 912,714 920,729 905,756 910,775 905,770 938,640 835,919 907,950'],
    ['E', '338,1183 293,1235'],
  ]],
  ['#b98cfb', [
    ['A', '549,250 615,237 652,216 696,202 688,229 662,262 648,268 657,265 688,317 679,332 657,332 562,335 645,345 641,350 568,380 606,380 566,395 565,405 588,414 606,417 563,447 918,300 900,321 904,354 920,376 906,391 974,329 1061,244 928,681 1109,247 1117,273 1129,298 1167,280 1171,294 1184,273 1200,322 1250,289 1282,252 1308,249 1330,270 1330,288 1338,291 1362,312 1381,314 1370,322 1364,335 1423,336 1405,349 1435,352 1457,335 1474,325 1376,365 1406,376 1390,392 1388,405 1418,424 1438,399 1376,463 1459,491 1256,467 1291,495 1326,570 1349,570 1320,628 1480,605 1475,767 1541,824 1462,974'],
    ['B', '163,283 213,284 150,323 158,332 155,342 155,354 175,384 148,405 135,430 148,457 160,525 188,542 193,572 204,435 237,461 279,425 309,456 334,462 395,502 433,544 427,622 475,544 477,508 505,530 220,755 250,967 538,834 613,286 633,333 649,357 617,412 600,448 593,455 568,460 628,450 637,451 553,484 545,498 532,503 536,505 540,497 560,512 550,522 535,528 532,542 550,528 562,518 575,513 585,515 578,543 600,541 608,545 615,548 728,517 765,515 775,505 795,500 808,470 826,477 818,490 805,500 820,508 810,520 817,515 848,507 852,520 775,544 845,540 838,393 870,467 868,492 888,495 875,503 882,505 880,512 928,543 932,544 822,498 193,1109 174,1174 318,1156 822,1007'],
  ]],
  ['#5bcbf8', [
    ['B', '1026,276 951,359 1054,334 1069,403 1075,415 1080,425 1072,430 1068,445 1075,438 1002,431 1040,443 1025,450 1035,452 997,480 1112,455 1186,437 1188,518 1227,502 1240,498 1235,500 1335,503 1290,440 1293,340 1246,594 1258,596 1265,597 1272,597 1319,595 1349,664 1409,632 993,1027 1022,1030 1163,999 1325,955'],
    ['C', '237,345 240,362 218,377 235,376 274,383 282,407 234,435 280,447 280,550 244,580 246,614 275,603 270,616 266,649 284,733 287,736 322,595 340,600 352,605 362,600 338,615 350,618 360,622 337,627 330,610 413,560 453,583 440,590 425,598 432,600 445,608 450,600 458,612 462,622 470,620 455,632 468,636 455,648 490,632 494,645 505,608 494,676 528,697 497,735 540,748 568,745 580,762 540,798 548,623 555,630 575,658 565,670 580,668 590,672 583,680 600,668 612,668 622,668 630,668 575,478 572,512 580,516 591,530 606,485 610,383 603,392 590,402 598,403 622,427 600,558 610,555 618,553 630,551 595,574 615,570 620,580 628,590 618,595 602,606 613,606 630,706 620,733 615,748 650,735 660,750 606,770 610,775 607,790 723,535 817,792 347,915 482,903 427,1018 125,955'],
  ]],
  ['#b0f95a', [
    ['C', '314,1095 314,1138 318,1141 334,1140 858,1145 878,1151 882,1148 901,1190'],
  ]],
  ['#f7987f', [['C', '1092,687']]],
  ['#9d8427', [
    ['A', '554,430 545,434 535,443 549,487 550,504 905,366 895,408 912,418 905,422 887,430 932,427'],
  ]],
].map(([fill, parts]) => [fill, parts.flatMap(([t, s]) => project(t, s))]);

const legend = [
  ['1', '#26361a'], ['2', '#5abfe8'], ['3', '#1c021f'], ['4', '#abee55'], ['5', '#e3937e'],
  ['6', '#7e170f'], ['7', '#b088ea'], ['8', '#0000e8'], ['99', '#968025'],
];

function GridMap() {
  return (
    <MapSvg width="3000" height="569" viewBox="0 941 3000 569">
      <g fill="#808080" stroke="#a9a9a9" strokeWidth="1.500" strokeLinejoin="round">
        <path d={coast} />
        <path d={islands} />
      </g>
      <path d={borders} fill="none" stroke="#a9a9a9" strokeWidth="1.500" strokeLinejoin="round" />
      <path d="M2321.500 1350V1482" stroke="#686868" strokeWidth="1" />
      <path d={circuits} fill="none" stroke="#0c0cec" strokeWidth="1.500" />
      {groups.map(([fill, pts]) => (
        <g key={fill} fill={fill}>
          {pts.map(([x, y], i) => <circle key={i} cx={x} cy={y} r="4.100" />)}
        </g>
      ))}
      <rect x="2800" y="1092.700" width="96" height="287" fill={c.bg} stroke="#fff" strokeWidth="2" />
      {legend.map(([name, fill], i) => (
        <g key={name}>
          <circle cx="2832" cy={1116.300 + i * 30} r="4.100" fill={fill} />
          <text x="2863.500" y={1123 + i * 30} fontFamily="Liberation Sans, Arial, sans-serif" fontSize="17" fill="#000">{name}</text>
        </g>
      ))}
    </MapSvg>
  );
}

export default function App() {
  return (
    <>
      <Global />
      <Page>
        <Header>
          <NrelLogo />
          <AppTitle>PowerApps.jl</AppTitle>
          <GithubMark width="57" height="57" viewBox="0 0 24 24" fill="#fff">
            <path d="M12 .297c-6.630 0-12 5.373-12 12 0 5.303 3.438 9.800 8.205 11.385.6.113.82-.258.82-.577 0-.285-.01-1.040-.015-2.040-3.338.724-4.042-1.610-4.042-1.610C4.422 18.070 3.633 17.700 3.633 17.700c-1.087-.744.084-.729.084-.729 1.205.084 1.838 1.236 1.838 1.236 1.070 1.835 2.809 1.305 3.495.998.108-.776.417-1.305.76-1.605-2.665-.3-5.466-1.332-5.466-5.930 0-1.310.465-2.380 1.235-3.220-.135-.303-.54-1.523.105-3.176 0 0 1.005-.322 3.300 1.230.96-.267 1.980-.399 3-.405 1.020.006 2.040.138 3 .405 2.280-1.552 3.285-1.230 3.285-1.230.645 1.653.24 2.873.12 3.176.765.84 1.230 1.910 1.230 3.220 0 4.610-2.805 5.625-5.475 5.920.42.36.81 1.096.81 2.220 0 1.606-.015 2.896-.015 3.286 0 .315.21.69.825.57C20.565 22.092 24 17.592 24 12.297c0-6.627-5.373-12-12-12" />
          </GithubMark>
          <GithubButton>View on GitHub</GithubButton>
        </Header>
        <Tabs>
          <Tab>SYSTEM</Tab>
          <Tab>TIME SERIES</Tab>
          <Tab $active>MAP</Tab>
        </Tabs>
        <Controls>
          <Settings>
            <Heading $strong>Map View</Heading>
            <FileRow>
              <PathField><PathText>/SIIP-PR/data/inputs_gis/Municipalities-Shapefile/municipalities.shp</PathText></PathField>
              <Button $kind="file" $w={246}>Load Shapefile</Button>
            </FileRow>
            <StyleColumns>
              <StyleColumn>
                <Heading>Bus Style</Heading>
                <Field $gap={47}>
                  <FieldLabel $w={163}>Hover:</FieldLabel>
                  <RadioGroup name="hover" items={['name', 'full', 'none']} selected="name" />
                </Field>
                <Field $gap={42}>
                  <FieldLabel $w={152}>Color:</FieldLabel>
                  <RadioGroup name="busColor" items={['area', 'load_zone', 'bustype', 'base_voltage']} selected="area" top={3} />
                </Field>
                <Field $gap={43} $indent={406}>
                  <FieldLabel $w={113}>α:</FieldLabel>
                  <Slider width={365} value={328} margin="24px 0 0" />
                </Field>
                <Field $gap={59}>
                  <FieldLabel $w={126}>Size:</FieldLabel>
                  <RadioGroup
                    name="size"
                    items={['Generator', 'ThermalGen', 'RenewableGen', 'StaticLoad', 'ControllableLoad', 'base_voltage', 'none']}
                    selected="none"
                    width={700}
                    top={3}
                  />
                </Field>
                <Slider width={845} value={113} bubble="2" margin="46px 0 0 39px" />
              </StyleColumn>
              <StyleColumn>
                <Heading>Line Style</Heading>
                <Field $gap={47}>
                  <FieldLabel $w={141}>Color:</FieldLabel>
                  <RadioGroup name="lineColor" items={['blue', 'red', 'green', 'white']} selected="blue" />
                </Field>
                <Field $gap={42} $indent={230}>
                  <FieldLabel $w={100}>α:</FieldLabel>
                  <Slider width={188} value={170} margin="24px 0 0" />
                </Field>
                <Field $gap={60}>
                  <FieldLabel>Width:</FieldLabel>
                </Field>
                <Slider width={479} value={96} bubble="1" margin="28px 0 0 39px" />
              </StyleColumn>
            </StyleColumns>
          </Settings>
          <Actions>
            <SiennaLogo />
            <Button $kind="accent" $w={315}>PowerSystemsMaps.jl</Button>
            <PlotSlot><Button $kind="dim" $w={185} $track={1.6}>Plot Map</Button></PlotSlot>
          </Actions>
        </Controls>
        <GridMap />
      </Page>
    </>
  );
}
